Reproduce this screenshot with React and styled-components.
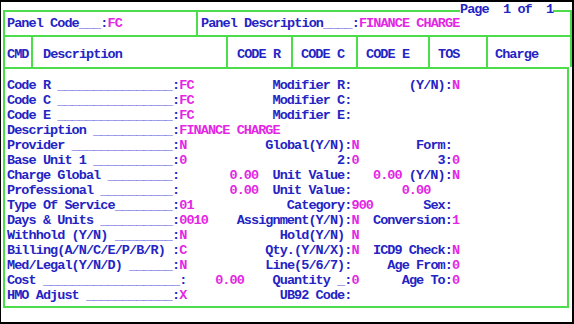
import React from 'react';
import styled, { createGlobalStyle } from 'styled-components';

const GREEN = '#4cdc4c';
const BLUE = '#2424c4';
const RULE = '#5858dc';
const MAGENTA = '#e426e4';

const Global = createGlobalStyle`
  html, body { margin: 0; padding: 0; background: #fff; }
`;

const Screen = styled.div`
  width: 574px;
  height: 324px;
  box-sizing: border-box;
  border-style: solid;
  border-color: #000;
  border-width: 2px 2px 2px 1px;
  padding: 8px 0 0 2px;
  background: #fff;
  font-family: "Liberation Mono", "DejaVu Sans Mono", monospace;
  font-weight: 700;
  font-size: 13.5px;
  letter-spacing: -0.926px;
  color: ${BLUE};
  display: flex;
  flex-direction: column;
`;

const Header = styled.section`
  position: relative;
  height: 57px;
  box-sizing: border-box;
  border: 2px solid ${GREEN};
  border-bottom: none;
  display: grid;
  grid-template-rows: 23px 32px;
`;

const Legend = styled.div`
  position: absolute;
  top: -10px;
  left: 455px;
  line-height: 15px;
  background: #fff;
  white-space: pre;
`;

const TitleRow = styled.div`
  display: grid;
  grid-template-columns: 191px 1fr;
`;

const ColumnRow = styled.div`
  display: grid;
  grid-template-columns: 26px 195px 65px 65px 72px 58px 1fr;
  border-top: 2px solid ${GREEN};
`;

const Cell = styled.div`
  box-sizing: border-box;
  display: flex;
  align-items: center;
  white-space: pre;
  padding-left: ${(p) => p.$pad}px;
  padding-top: ${(p) => p.$top || 0}px;
  border-left: ${(p) => (p.$first ? 'none' : `2px solid ${GREEN}`)};
`;

const Body = styled.section`
  margin-right: 3px;
  box-sizing: border-box;
  height: 241px;
  border: 2px solid ${GREEN};
  padding: 9px 0 3px 2px;
`;

const Line = styled.div`
  height: 15px;
  line-height: 15px;
  white-space: pre;
`;

const Value = styled.span`
  color: ${MAGENTA};
`;

const Rule = styled.span`
  color: ${RULE};
`;

function Rich({ text }) {
  const parts = text.split(/(\{[^}]*\}|_+)/).filter((p) => p !== '');
  return parts.map((p, i) => {
    if (p.startsWith('{')) return <Value key={i}>{p.slice(1, -1)}</Value>;
    if (p.startsWith('_')) return <Rule key={i}>{p}</Rule>;
    return <React.Fragment key={i}>{p}</React.Fragment>;
  });
}

const plainLen = (t) => t.replace(/[{}]/g, '').length;

function build(items) {
  let s = '';
  let len = 0;
  for (const [col, txt] of items) {
    const target = col - 1;
    if (target > len) {
      s += ' '.repeat(target - len);
      len = target;
    }
    s += txt;
    len += plainLen(txt);
  }
  return s;
}

const lines = [
  [[1, 'Code R ________________:{FC}'], [38, 'Modifier R:'], [57, '(Y/N):{N}']],
  [[1, 'Code C ________________:{FC}'], [38, 'Modifier C:']],
  [[1, 'Code E ________________:{FC}'], [38, 'Modifier E:']],
  [[1, 'Description ___________:{FINANCE CHARGE}']],
  [[1, 'Provider ______________:{N}'], [37, 'Global(Y/N):{N}'], [58, 'Form:']],
  [[1, 'Base Unit 1 ___________:{0}'], [47, '2:{0}'], [61, '3:{0}']],
  [[1, 'Charge Global _________:'], [32, '{0.00}'], [38, 'Unit Value:'], [52, '{0.00}'], [57, '(Y/N):{N}']],
  [[1, 'Professional __________:'], [32, '{0.00}'], [38, 'Unit Value:'], [56, '{0.00}']],
  [[1, 'Type Of Service________:{01}'], [40, 'Category:{900}'], [59, 'Sex:']],
  [[1, 'Days & Units __________:{0010}'], [33, 'Assignment(Y/N):{N}'], [52, 'Conversion:{1}']],
  [[1, 'Withhold (Y/N) ________:{N}'], [39, 'Hold(Y/N) {N}']],
  [[1, 'Billing(A/N/C/E/P/B/R) :{C}'], [37, 'Qty.(Y/N/X):{N}'], [52, 'ICD9 Check:{N}']],
  [[1, 'Med/Legal(Y/N/D) ______:{N}'], [37, 'Line(5/6/7):'], [54, 'Age From:{0}']],
  [[1, 'Cost ___________________:'], [30, '{0.00}'], [38, 'Quantity _:{0}'], [56, 'Age To:{0}']],
  [[1, 'HMO Adjust ____________:{X}'], [39, 'UB92 Code:']],
];

const columns = [
  { label: 'CMD', pad: 2 },
  { label: 'Description', pad: 10 },
  { label: 'CODE R', pad: 9 },
  { label: 'CODE C', pad: 8 },
  { label: 'CODE E', pad: 8 },
  { label: 'TOS', pad: 8 },
  { label: 'Charge', pad: 7 },
];

export default function App() {
  return (
    <>
      <Global />
      <Screen>
        <Header>
          <Legend>Page  1 of  1</Legend>
          <TitleRow>
            <Cell $first $pad={2}>
              <Rich text="Panel Code___:{FC}" />
            </Cell>
            <Cell $pad={3}>
              <Rich text="Panel Description____:{FINANCE CHARGE}" />
            </Cell>
          </TitleRow>
          <ColumnRow>
            {columns.map((c, i) => (
              <Cell key={c.label} $first={i === 0} $pad={c.pad} $top={4}>
                {c.label}
              </Cell>
            ))}
          </ColumnRow>
        </Header>
        <Body>
          {lines.map((items, i) => (
            <Line key={i}>
              <Rich text={build(items)} />
            </Line>
          ))}
        </Body>
      </Screen>
    </>
  );
}
